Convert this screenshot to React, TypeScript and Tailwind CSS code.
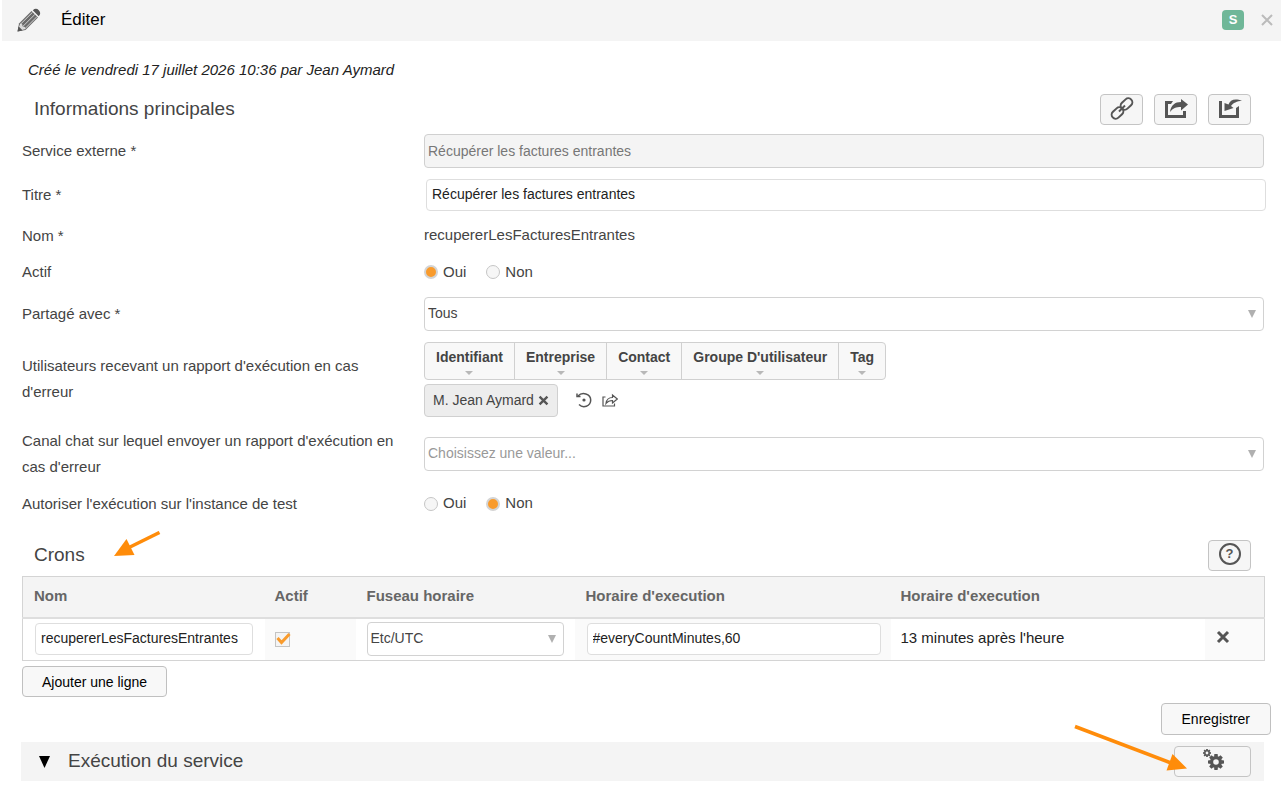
import { useState } from 'react';
import type { ReactNode } from 'react';

const pickers = ['Identifiant', 'Entreprise', 'Contact', "Groupe D'utilisateur", 'Tag'];

interface FormRowProps {
  label: string;
  htmlFor?: string;
  className: string;
  children: ReactNode;
}

function FormRow({ label, htmlFor, className, children }: FormRowProps) {
  return (
    <div className={`grid grid-cols-[402px_1fr] items-center ${className}`}>
      <label htmlFor={htmlFor} className="pr-3 leading-[26px]">
        {label}
      </label>
      <div>{children}</div>
    </div>
  );
}

function IconButton({ label, className = 'w-[43px]', children }: { label: string; className?: string; children: ReactNode }) {
  return (
    <button
      type="button"
      aria-label={label}
      className={`flex h-[31px] items-start justify-center rounded border border-[#c4c4c4] bg-[#f6f6f6] pt-0.5 text-[#555] ${className}`}
    >
      {children}
    </button>
  );
}

interface SelectProps {
  id: string;
  label?: string;
  value: string;
  className?: string;
}

function Select({ id, label, value, className = 'text-[#444]' }: SelectProps) {
  return (
    <div className="relative">
      <select
        id={id}
        aria-label={label}
        className={`block h-[34px] w-full appearance-none rounded border border-[#d2d2d2] bg-white px-[3px] pb-0.5 text-sm ${className}`}
      >
        <option>{value}</option>
      </select>
      <svg className="pointer-events-none absolute top-[13px] right-2 h-2 w-2 text-[#b0b0b0]" viewBox="0 0 8 8">
        <path d="M0 0h8L4 8z" fill="currentColor" />
      </svg>
    </div>
  );
}

function YesNo({ name, initial }: { name: string; initial: string }) {
  const [value, setValue] = useState(initial);

  return (
    <div className="flex items-center gap-5">
      {['Oui', 'Non'].map((option) => (
        <label key={option} className="flex items-center gap-[5px]">
          <input
            type="radio"
            name={name}
            checked={value === option}
            onChange={() => setValue(option)}
            className="h-[14px] w-[14px] appearance-none rounded-full border border-[#c6c6c6] bg-[#f6f6f6] checked:border-2 checked:border-[#d4d4d4] checked:bg-[#f99b2c]"
          />
          {option}
        </label>
      ))}
    </div>
  );
}

function Cross({ className, width = 3 }: { className: string; width?: number }) {
  return (
    <svg className={className} viewBox="0 0 14 14" fill="none" stroke="currentColor" strokeWidth={width}>
      <path d="M2 2l10 10M12 2L2 12" />
    </svg>
  );
}

function Gear({ x, y, scale }: { x: number; y: number; scale: number }) {
  return (
    <g transform={`translate(${x} ${y}) scale(${scale})`}>
      <circle r="4.4" fill="none" stroke="currentColor" strokeWidth="3.2" />
      {[0, 45, 90, 135, 180, 225, 270, 315].map((angle) => (
        <path key={angle} d="M-2-5.200L-1.600-8H1.600L2-5.200z" transform={`rotate(${angle})`} fill="currentColor" />
      ))}
    </g>
  );
}

function PencilIcon() {
  return (
    <svg className="h-6 w-6" viewBox="0 0 24 24" fill="none">
      <path d="M.5 23.500L2 15.500 14.500 3l6.500 6.500L8.500 22z" fill="#6a6a6a" />
      <path d="M3.200 16.500L15.500 4.300M5.600 18.700L17.800 6.500M7.800 20.800L20 8.600" stroke="#eee" strokeWidth=".8" />
      <path d="M3.200 15.500l2 .8.400 2.200 2.200.4.800 2L5 22l-3-3z" fill="#f4f4f4" fillOpacity=".8" />
      <path d="M.5 23.500L1.500 18.500l4 4z" fill="#555" />
      <path d="M15.800 2.200C18 .2 20 .4 21.800 2.200s2 4-.1 6z" fill="#555" />
    </svg>
  );
}

function LinkIcon() {
  return (
    <svg className="h-6 w-6" viewBox="0 0 24 24" fill="none" stroke="currentColor" strokeWidth="2">
      <rect x="-6.500" y="-4" width="13" height="8" rx="4" transform="translate(16.500 7) rotate(-43)" />
      <rect x="-6.500" y="-4" width="13" height="8" rx="4" transform="translate(7.500 16) rotate(-43)" />
      <path d="M9 14.500l6-6" />
    </svg>
  );
}

function ExportIcon() {
  return (
    <svg className="h-6 w-6" viewBox="0 0 24 24">
      <path d="M9 4H1v17h21v-7h-3v4H4V7h3z" fill="currentColor" />
      <path d="M6 15C7 8 11 5 17 5V2l7 5.500-7 6V10c-5 0-8 1-11 5z" fill="currentColor" />
    </svg>
  );
}

function ImportIcon() {
  return (
    <svg className="h-6 w-6" viewBox="0 0 24 24">
      <path d="M1 4v17h20V9l-3 2v7H4V4z" fill="currentColor" />
      <path d="M24 4C17 1 12 3 10.500 7.500L6.500 6v8l9-3-2.500-2c2-3 6-5 11-5z" fill="currentColor" />
    </svg>
  );
}

function HistoryIcon() {
  return (
    <svg className="h-4 w-4" viewBox="0 0 16 16" fill="none" stroke="currentColor" strokeWidth="1.500">
      <path d="M2 4C6-.4 14.700 1.500 14.700 8S7 16.500 3 12.500" />
      <path d="M1 1.500V4.500h3.500" />
      <circle cx="8" cy="8" r="1.600" fill="currentColor" stroke="none" />
    </svg>
  );
}

function ShareIcon() {
  return (
    <svg className="h-4 w-4" viewBox="0 0 16 16" fill="none" stroke="currentColor" strokeWidth="1.200">
      <path d="M3.500 5H1v9h11.500v-2.500" />
      <path d="M4 11.500C4.500 7.500 7 5.500 10.500 5.500V3L15.300 7l-4.800 4V8.500C7.500 8.500 5.500 9.500 4 11.500z" />
    </svg>
  );
}

export default function App() {
  const [active, setActive] = useState(true);

  return (
    <div className="bg-white font-['Liberation_Sans',Arial,sans-serif] text-[15px] text-[#444]">
      <header className="ml-0.5 flex h-[41px] items-center bg-[#f4f4f4] pr-[7px] pb-0.5 pl-[15px]">
        <PencilIcon />
        <h1 className="ml-5 text-[17px] text-black">Éditer</h1>
        <span className="ml-auto flex h-5 w-[22px] items-center justify-center rounded bg-[#6fb798] text-[13px] font-bold text-white">
          S
        </span>
        <button type="button" aria-label="Fermer" className="ml-4 text-[#bbb]">
          <Cross className="h-[14px] w-[14px]" width={2} />
        </button>
      </header>

      <main className="pr-[17px] pl-[22px]">
        <p className="mt-[17px] ml-[6px] leading-6 text-[#222] italic">
          Créé le vendredi 17 juillet 2026 10:36 par Jean Aymard
        </p>
        <div className="mt-3 mb-[5px] flex items-center pr-[13px] pl-3">
          <h2 className="text-[19px]">Informations principales</h2>
          <div className="ml-auto flex gap-[11px]">
            <IconButton label="Copier le lien">
              <LinkIcon />
            </IconButton>
            <IconButton label="Exporter">
              <ExportIcon />
            </IconButton>
            <IconButton label="Importer">
              <ImportIcon />
            </IconButton>
          </div>
        </div>

        <FormRow label="Service externe *" htmlFor="service" className="h-[42px]">
          <input
            id="service"
            disabled
            defaultValue="Récupérer les factures entrantes"
            className="block h-[34px] w-full rounded border border-[#d0d0d0] bg-[#f4f4f4] px-[3px] text-sm text-[#777]"
          />
        </FormRow>
        <FormRow label="Titre *" htmlFor="title" className="h-[45px]">
          <input
            id="title"
            defaultValue="Récupérer les factures entrantes"
            className="ml-0.5 block h-8 w-full rounded border border-[#dedede] px-[5px] pb-0.5 text-sm text-[#222]"
          />
        </FormRow>
        <FormRow label="Nom *" className="h-[37px]">
          recupererLesFacturesEntrantes
        </FormRow>
        <FormRow label="Actif" className="h-9">
          <YesNo name="actif" initial="Oui" />
        </FormRow>
        <FormRow label="Partagé avec *" htmlFor="shared" className="h-[47px]">
          <Select id="shared" value="Tous" />
        </FormRow>
        <FormRow label="Utilisateurs recevant un rapport d'exécution en cas d'erreur" className="min-h-[84px]">
          <div className="inline-flex h-[38px] divide-x divide-[#d0d0d0] rounded border border-[#d0d0d0] bg-[#f8f8f8]">
            {pickers.map((picker) => (
              <button key={picker} type="button" className="flex flex-col items-center px-[11px] pt-1 text-sm font-bold">
                {picker}
                <svg className="mt-1 h-1 w-2 text-[#b8b8b8]" viewBox="0 0 8 4">
                  <path d="M0 0h8L4 4z" fill="currentColor" />
                </svg>
              </button>
            ))}
          </div>
          <div className="mt-1 flex items-center">
            <span className="flex h-[33px] items-center gap-1 rounded border border-[#d0d0d0] bg-[#ededed] px-2 text-sm">
              M. Jean Aymard
              <button type="button" aria-label="Retirer M. Jean Aymard" className="text-[#555]">
                <Cross className="h-[11px] w-[11px]" />
              </button>
            </span>
            <button type="button" aria-label="Historique" className="ml-[18px] text-[#555]">
              <HistoryIcon />
            </button>
            <button type="button" aria-label="Partager" className="ml-[10px] text-[#555]">
              <ShareIcon />
            </button>
          </div>
        </FormRow>
        <FormRow
          label="Canal chat sur lequel envoyer un rapport d'exécution en cas d'erreur"
          htmlFor="channel"
          className="min-h-[65px]"
        >
          <Select id="channel" value="Choisissez une valeur..." className="text-[#999]" />
        </FormRow>
        <FormRow label="Autoriser l'exécution sur l'instance de test" className="h-[35px]">
          <YesNo name="test" initial="Non" />
        </FormRow>

        <div className="relative mt-[19px] mb-[5px] flex items-center justify-between pr-[13px] pl-3">
          <h2 className="text-[19px]">Crons</h2>
          <svg className="absolute -top-[9px] left-[92px] h-[26px] w-[48px] text-[#ff8c0a]" viewBox="0 0 48 26">
            <path d="M0 25L12.500 8l8 16z" fill="currentColor" />
            <path d="M14 17L45.500 1.500" stroke="currentColor" strokeWidth="3.500" />
          </svg>
          <IconButton label="Aide">
            <span className="flex h-[22px] w-[22px] items-center justify-center rounded-full border-2 border-[#555] text-[13px] font-bold">
              ?
            </span>
          </IconButton>
        </div>

        <table className="w-full table-fixed border border-[#d4d4d4] text-left">
          <thead>
            <tr className="h-[41px] border-b-2 border-[#dedede] bg-[#f4f4f4] text-[#666]">
              <th className="w-[242px] pb-0.5 pl-[11px]">Nom</th>
              <th className="w-[91px] pb-0.5 pl-[10px]">Actif</th>
              <th className="w-[219px] pb-0.5 pl-[11px]">Fuseau horaire</th>
              <th className="w-[316px] pb-0.5 pl-[11px]">Horaire d'execution</th>
              <th className="w-[314px] pb-0.5 pl-[10px]">Horaire d'execution</th>
              <th className="w-[60px]" aria-label="Actions" />
            </tr>
          </thead>
          <tbody>
            <tr className="h-[43px]">
              <td className="px-3">
                <input
                  aria-label="Nom"
                  defaultValue="recupererLesFacturesEntrantes"
                  className="block h-8 w-full rounded border border-[#dedede] bg-white px-[5px] pb-0.5 text-sm text-[#222]"
                />
              </td>
              <td className="bg-[#fafafa] pl-[10px]">
                <span className="relative block h-[15px] w-[15px]">
                  <input
                    type="checkbox"
                    aria-label="Actif"
                    checked={active}
                    onChange={() => setActive(!active)}
                    className="block h-[15px] w-[15px] appearance-none border border-[#c4c4c4] bg-[#f4f4f4]"
                  />
                  {active && (
                    <svg className="pointer-events-none absolute top-0 left-0 h-[15px] w-4" viewBox="0 0 16 15">
                      <path d="M2.500 6l4 4.500L14.500 2" fill="none" stroke="#f99b2c" strokeWidth="3" />
                    </svg>
                  )}
                </span>
              </td>
              <td className="px-[11px]">
                <Select id="timezone" label="Fuseau horaire" value="Etc/UTC" />
              </td>
              <td className="bg-[#fafafa] pr-[10px] pl-3">
                <input
                  aria-label="Horaire d'execution"
                  defaultValue="#everyCountMinutes,60"
                  className="block h-8 w-full rounded border border-[#dedede] bg-white px-[5px] pb-0.5 text-sm text-[#222]"
                />
              </td>
              <td className="pb-0.5 pl-[10px] text-[#222]">13 minutes après l'heure</td>
              <td className="bg-[#fafafa] pb-1 pl-[11px]">
                <button type="button" aria-label="Supprimer la ligne" className="block text-[#555]">
                  <Cross className="h-[14px] w-[14px]" />
                </button>
              </td>
            </tr>
          </tbody>
        </table>

        <button
          type="button"
          className="mt-[5px] block h-[31px] rounded border border-[#c0c0c0] bg-[#f8f8f8] px-[19px] text-sm text-black"
        >
          Ajouter une ligne
        </button>
        <button
          type="button"
          className="mt-[6px] -mr-[7px] ml-auto block h-8 rounded border border-[#c0c0c0] bg-[#f8f8f8] px-5 text-sm text-black"
        >
          Enregistrer
        </button>

        <section className="relative mt-[7px] -ml-px flex h-[39px] items-center bg-[#f4f4f4] pr-[13px] pl-[17px]">
          <svg className="h-3 w-[13px]" viewBox="0 0 13 12">
            <path d="M1 0h11L6.500 12z" />
          </svg>
          <h2 className="ml-[17px] text-[19px]">Exécution du service</h2>
          <IconButton label="Exécuter le service" className="ml-auto w-[77px]">
            <svg className="h-6 w-6" viewBox="0 0 24 24">
              <Gear x={6} y={4} scale={0.5} />
              <Gear x={15} y={13} scale={1} />
            </svg>
          </IconButton>
          <svg className="absolute right-[76px] bottom-[9px] h-[48px] w-[114px] text-[#ff8c0a]" viewBox="0 0 114 48">
            <path d="M1 2.500L97 39" stroke="currentColor" strokeWidth="3.500" />
            <path d="M113 44.500L98.500 30l-6 16.500z" fill="currentColor" />
          </svg>
        </section>
      </main>
    </div>
  );
}
